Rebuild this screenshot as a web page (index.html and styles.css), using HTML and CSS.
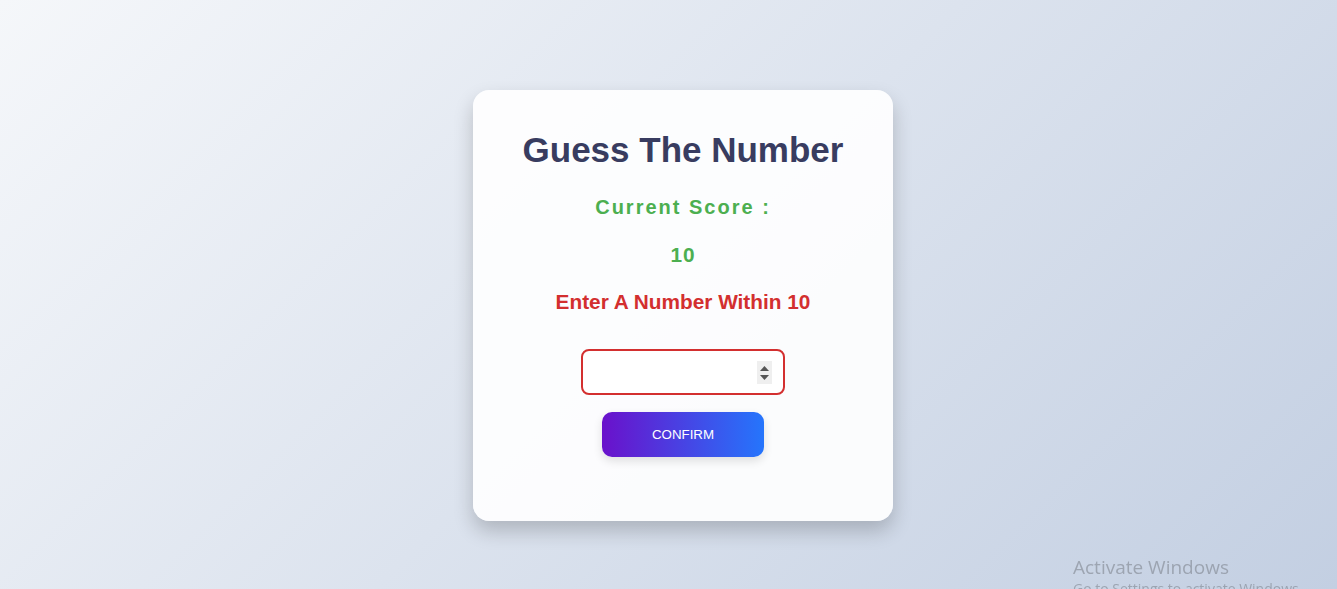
FILE: index.html
```html
<!DOCTYPE html>
<html lang="en">
<head>
<meta charset="utf-8">
<title>Guess The Number</title>
<link rel="stylesheet" href="styles.css">
</head>
<body>
<main class="page">
  <section class="card">
    <h1 class="title">Guess The Number</h1>
    <p class="score-label">Current Score :</p>
    <p class="score-value">10</p>
    <p class="hint">Enter A Number Within 10</p>
    <div class="input-wrap">
      <input class="guess" type="number">
      <span class="spinner" aria-hidden="true">
        <svg width="9" height="5" viewBox="0 0 9 5"><path d="M4.5 0 L9 5 L0 5 Z" fill="#555"/></svg>
        <svg width="9" height="5" viewBox="0 0 9 5"><path d="M0 0 L9 0 L4.5 5 Z" fill="#555"/></svg>
      </span>
    </div>
    <button class="confirm" type="button">CONFIRM</button>
  </section>
</main>
<div class="watermark">
  <div class="wm-title">Activate Windows</div>
  <div class="wm-sub">Go to Settings to activate Windows.</div>
</div>
</body>
</html>
```

FILE: styles.css
```css
html, body {
  margin: 0;
  height: 100%;
}
body {
  background: linear-gradient(135deg, #f5f7fa 0%, #c3cfe2 100%);
  font-family: "Liberation Sans", Arial, sans-serif;
  overflow: hidden;
}
.page {
  display: flex;
  justify-content: center;
  align-items: flex-start;
  padding: 90px 0 0 29px;
}
.card {
  width: 420px;
  height: 431px;
  box-sizing: border-box;
  background: rgba(255, 255, 255, 0.9);
  border-radius: 16px;
  box-shadow: 0 10px 20px rgba(0, 0, 0, 0.2);
  display: flex;
  flex-direction: column;
  align-items: center;
  padding-top: 38px;
}
.title {
  margin: 0;
  font-size: 35px;
  line-height: 44px;
  font-weight: 700;
  color: #383c60;
}
.score-label {
  margin: 23px 0 0;
  font-size: 20px;
  line-height: 24px;
  font-weight: 700;
  letter-spacing: 2px;
  color: #4caf50;
}
.score-value {
  margin: 24px 0 0;
  font-size: 20.8px;
  line-height: 24px;
  font-weight: 700;
  letter-spacing: 1px;
  color: #4caf50;
}
.hint {
  margin: 23px 0 0;
  font-size: 20.8px;
  line-height: 24px;
  font-weight: 700;
  color: #d32f2f;
}
.input-wrap {
  position: relative;
  margin-top: 35px;
}
.guess {
  display: block;
  width: 204px;
  height: 46px;
  box-sizing: border-box;
  border: 2px solid #d32f2f;
  border-radius: 8px;
  background: #fff;
  outline: none;
  font-size: 16px;
  padding: 0 12px;
  -moz-appearance: textfield;
}
.guess::-webkit-inner-spin-button,
.guess::-webkit-outer-spin-button {
  -webkit-appearance: none;
  margin: 0;
}
.spinner {
  position: absolute;
  left: 176px;
  top: 12px;
  width: 15px;
  height: 23px;
  background: #efefef;
  display: flex;
  flex-direction: column;
  align-items: center;
  justify-content: center;
  gap: 4px;
}
.spinner svg {
  display: block;
}
.confirm {
  margin-top: 17px;
  width: 162px;
  height: 45px;
  border: none;
  border-radius: 10px;
  background: linear-gradient(90deg, #6a11cb 0%, #2575fc 100%);
  color: #fff;
  font-family: "Liberation Sans", Arial, sans-serif;
  font-size: 13.333px;
  box-shadow: 0 4px 10px rgba(0, 0, 0, 0.12);
  cursor: pointer;
}
.watermark {
  position: fixed;
  left: 1073px;
  top: 555px;
  color: rgba(120, 125, 135, 0.55);
  font-family: "Open Sans", "Noto Sans", sans-serif;
  white-space: nowrap;
}
.wm-title {
  font-size: 19px;
  line-height: 25px;
}
.wm-sub {
  font-size: 14px;
  line-height: 18px;
}
```
